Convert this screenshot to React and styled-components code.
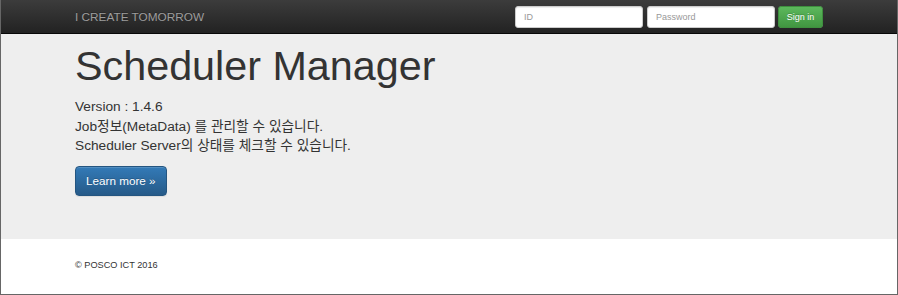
import React from 'react';
import styled, { createGlobalStyle } from 'styled-components';

const GlobalStyle = createGlobalStyle`
  html, body {
    margin: 0;
    padding: 0;
    background-color: #ffffff;
  }

  body {
    font-family: "Liberation Sans", Arial, "Noto Sans CJK KR", sans-serif;
    color: #333333;
  }

  * {
    box-sizing: border-box;
  }
`;

const StyledFrame = styled.div`
  display: flex;
  flex-direction: column;
  height: 295px;
  border: 1px solid #666666;
  border-top: none;
  overflow: hidden;
`;

const StyledContainer = styled.div`
  width: 748px;
  margin: 0 auto;
`;

const StyledNavbar = styled.nav`
  height: 34px;
  background-image: linear-gradient(to bottom, #3c3c3c 0%, #222222 100%);
  border-bottom: 1px solid #080808;
`;

const StyledNavInner = styled(StyledContainer)`
  display: flex;
  align-items: center;
  justify-content: space-between;
  height: 33px;
`;

const StyledBrand = styled.a`
  font-size: 11.8px;
  color: #9d9d9d;
  text-decoration: none;
  text-shadow: 0 -1px 0 rgba(0, 0, 0, 0.25);
  margin-top: 1px;
`;

const StyledLoginForm = styled.form`
  display: flex;
  align-items: center;
  gap: 4px;
  margin: 0;
`;

const StyledInput = styled.input`
  width: 128px;
  height: 22px;
  padding: 0 8px;
  font-family: inherit;
  font-size: 9px;
  color: #555555;
  background-color: #ffffff;
  border: 1px solid #cccccc;
  border-radius: 3px;
  box-shadow: inset 0 1px 1px rgba(0, 0, 0, 0.075);
  outline: none;

  &::placeholder {
    color: #999999;
  }
`;

const StyledSignIn = styled.button`
  width: 45px;
  height: 22px;
  margin-left: -1px;
  padding: 0;
  font-family: inherit;
  font-size: 9px;
  color: #ffffff;
  text-shadow: 0 -1px 0 rgba(0, 0, 0, 0.2);
  background-image: linear-gradient(to bottom, #5cb85c 0%, #419641 100%);
  border: 1px solid #3e8f3e;
  border-radius: 3px;
  cursor: pointer;
`;

const StyledJumbotron = styled.section`
  padding: 10px 0 43px;
  background-color: #eeeeee;
`;

const StyledTitle = styled.h1`
  margin: 0 0 8px;
  font-size: 41.3px;
  font-weight: 400;
  line-height: 45px;
  color: #333333;
`;

const StyledLead = styled.p`
  margin: 0 0 10px;
  font-size: 13.7px;
  line-height: 19.6px;
  color: #333333;
`;

const StyledActions = styled.div`
  display: flex;
`;

const StyledLearnMore = styled.a`
  display: inline-block;
  padding: 6px 10px;
  font-size: 11.7px;
  line-height: 16px;
  color: #ffffff;
  text-decoration: none;
  text-shadow: 0 -1px 0 rgba(0, 0, 0, 0.2);
  background-image: linear-gradient(to bottom, #337ab7 0%, #265a88 100%);
  border: 1px solid #245580;
  border-radius: 4px;
  box-shadow: inset 0 1px 0 rgba(255, 255, 255, 0.15), 0 1px 1px rgba(0, 0, 0, 0.075);
`;

const StyledFooter = styled.footer`
  flex: 1;
  padding-top: 20px;
  background-color: #ffffff;
`;

const StyledCopyright = styled.p`
  margin: 0;
  font-size: 9.2px;
  line-height: 13px;
  color: #333333;
`;

const App = () => (
  <>
    <GlobalStyle />
    <StyledFrame>
      <StyledNavbar>
        <StyledNavInner>
          <StyledBrand href="#">I CREATE TOMORROW</StyledBrand>
          <StyledLoginForm onSubmit={e => e.preventDefault()}>
            <StyledInput type="text" placeholder="ID" />
            <StyledInput type="password" placeholder="Password" />
            <StyledSignIn type="submit">Sign in</StyledSignIn>
          </StyledLoginForm>
        </StyledNavInner>
      </StyledNavbar>

      <StyledJumbotron>
        <StyledContainer>
          <StyledTitle>Scheduler Manager</StyledTitle>
          <StyledLead>
            Version : 1.4.6
            <br />
            Job정보(MetaData) 를 관리할 수 있습니다.
            <br />
            Scheduler Server의 상태를 체크할 수 있습니다.
          </StyledLead>
          <StyledActions>
            <StyledLearnMore href="#">Learn more »</StyledLearnMore>
          </StyledActions>
        </StyledContainer>
      </StyledJumbotron>

      <StyledFooter>
        <StyledContainer>
          <StyledCopyright>© POSCO ICT 2016</StyledCopyright>
        </StyledContainer>
      </StyledFooter>
    </StyledFrame>
  </>
);

export default App;
